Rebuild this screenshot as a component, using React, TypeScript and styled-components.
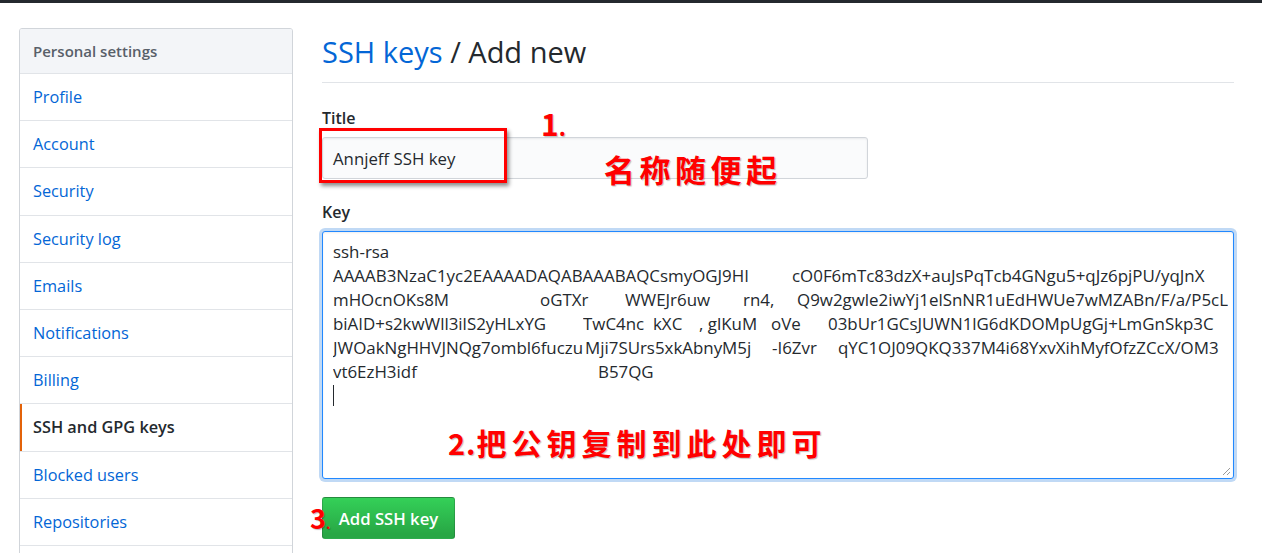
import React from "react";
import styled, { createGlobalStyle } from "styled-components";

const GlobalStyle = createGlobalStyle`
  html, body { margin: 0; padding: 0; overflow: hidden; background: #fff; }
  body {
    font-family: "Open Sans", "Noto Sans", sans-serif;
    color: #24292e;
    font-size: 16px;
  }
`;

const TopBar = styled.div`
  height: 3px;
  background: #24292e;
`;

const Page = styled.div`
  display: flex;
  align-items: flex-start;
  gap: 29px;
  padding: 25px 28px 0 19px;
`;

const Sidebar = styled.nav`
  flex: none;
  width: 274px;
  box-sizing: border-box;
  padding-bottom: 30px;
  border: 1px solid #d1d5da;
  border-radius: 3px;
  overflow: hidden;
`;

const MenuHeading = styled.div`
  display: flex;
  align-items: center;
  height: 44px;
  padding: 0 13px;
  background: #f3f5f8;
  border-bottom: 1px solid #e1e4e8;
  color: #586069;
  font-weight: 600;
  font-size: 15px;
`;

const MenuItem = styled.a<{ $selected?: boolean }>`
  display: flex;
  align-items: center;
  height: 46.2px;
  padding: 0 13px;
  border-bottom: 1px solid #e1e4e8;
  font-size: 16.3px;
  text-decoration: none;
  color: ${(p) => (p.$selected ? "#24292e" : "#0366d6")};
  font-weight: ${(p) => (p.$selected ? 600 : 400)};
  box-shadow: ${(p) => (p.$selected ? "inset 2px 0 0 #e36209" : "none")};
`;

const Main = styled.main`
  position: relative;
  flex: 1;
  min-width: 0;
`;

const Subhead = styled.div`
  margin-top: 4px;
  padding-bottom: 10px;
  border-bottom: 1px solid #e1e4e8;
`;

const Heading = styled.h2`
  margin: 0;
  font-size: 29px;
  font-weight: 400;
  line-height: 40px;
  color: #24292e;
`;

const HeadLink = styled.a`
  color: #0366d6;
  text-decoration: none;
`;

const FormGroup = styled.div<{ $top: number }>`
  margin-top: ${(p) => p.$top}px;
`;

const Label = styled.label`
  display: block;
  font-weight: 600;
  font-size: 16px;
  line-height: 24px;
  margin-bottom: 7px;
  color: #24292e;
`;

const TextInput = styled.div`
  display: flex;
  align-items: center;
  box-sizing: border-box;
  width: 546px;
  height: 42px;
  padding: 0 10px;
  background: #fafbfc;
  border: 1px solid #d1d5da;
  border-radius: 3px;
  box-shadow: inset 0 1px 2px rgba(27, 31, 35, 0.075);
  font-size: 16.8px;
`;

const KeyBox = styled.div`
  position: relative;
  box-sizing: border-box;
  height: 248px;
  padding: 8px 10px;
  background: #fff;
  border: 1px solid #2188ff;
  border-radius: 3px;
  box-shadow: inset 0 1px 2px rgba(27, 31, 35, 0.075), 0 0 0 3px rgba(3, 102, 214, 0.25);
  font-size: 16.9px;
  color: #24292e;
`;

const KeyLine = styled.div`
  display: flex;
  height: 24px;
  line-height: 24px;
  white-space: nowrap;
`;

const Seg = styled.span<{ $w?: number }>`
  flex: none;
  white-space: pre;
  overflow: hidden;
  ${(p) => (p.$w != null ? `width: ${p.$w}px;` : "")}
`;

const Caret = styled.span`
  display: block;
  width: 1px;
  height: 21px;
  margin-top: 1px;
  background: #24292e;
`;

const Resize = styled.svg`
  position: absolute;
  right: 2px;
  bottom: 2px;
`;

const Button = styled.button`
  display: flex;
  align-items: center;
  justify-content: center;
  margin-top: 18px;
  box-sizing: border-box;
  width: 133px;
  height: 42px;
  padding: 0 12px;
  border: 1px solid rgba(27, 31, 35, 0.2);
  border-radius: 3px;
  background: linear-gradient(-180deg, #34d058 0%, #28a745 90%);
  color: #fff;
  font-family: "Open Sans", "Noto Sans", sans-serif;
  font-size: 16.7px;
  font-weight: 600;
`;

const RedBox = styled.div`
  position: absolute;
  left: -3px;
  top: 100px;
  width: 188px;
  height: 55px;
  box-sizing: border-box;
  border: 3px solid #ff0000;
  box-shadow: 2px 3px 4px rgba(0, 0, 0, 0.45);
  pointer-events: none;
`;

const Note = styled.div<{ $x: number; $y: number; $size: number; $ls?: number }>`
  position: absolute;
  left: ${(p) => p.$x}px;
  top: ${(p) => p.$y}px;
  z-index: 2;
  display: flex;
  align-items: baseline;
  font-family: "Noto Sans CJK SC", "Noto Sans", sans-serif;
  font-weight: 700;
  font-size: ${(p) => p.$size}px;
  line-height: 1;
  letter-spacing: ${(p) => p.$ls ?? 0}px;
  color: #ff0000;
  text-shadow: 1px 1px 1px rgba(0, 0, 0, 0.25);
  white-space: nowrap;
`;

const Small = styled.span<{ $size: number; $ls?: number }>`
  font-size: ${(p) => p.$size}px;
  letter-spacing: ${(p) => p.$ls ?? 0}px;
`;

type Segment = { x: number; t: string };

const keyLines: Segment[][] = [
  [{ x: 0, t: "ssh-rsa" }],
  [
    { x: 0, t: "AAAAB3NzaC1yc2EAAAADAQABAAABAQCsmyOGJ9HI" },
    { x: 459, t: "cO0F6mTc83dzX+auJsPqTcb4GNgu5+qJz6pjPU/yqJnX" },
  ],
  [
    { x: 0, t: "mHOcnOKs8M" },
    { x: 207, t: "oGTXr" },
    { x: 292, t: "WWEJr6uw" },
    { x: 410, t: "rn4," },
    { x: 464, t: "Q9w2gwle2iwYj1elSnNR1uEdHWUe7wMZABn/F/a/P5cL" },
  ],
  [
    { x: 0, t: "biAID+s2kwWll3ilS2yHLxYG" },
    { x: 250, t: "TwC4nc" },
    { x: 320, t: "kXC" },
    { x: 366, t: ", glKuM" },
    { x: 438, t: "oVe" },
    { x: 495, t: "03bUr1GCsJUWN1lG6dKDOMpUgGj+LmGnSkp3C" },
  ],
  [
    { x: 0, t: "JWOakNgHHVJNQg7ombl6fuczu" },
    { x: 252, t: "Mji7SUrs5xkAbnyM5j" },
    { x: 439, t: "-I6Zvr" },
    { x: 505, t: "qYC1OJ09QKQ337M4i68YxvXihMyfOfzZCcX/OM3" },
  ],
  [
    { x: 0, t: "vt6EzH3idf" },
    { x: 265, t: "B57QG" },
  ],
];

const menu = [
  "Profile",
  "Account",
  "Security",
  "Security log",
  "Emails",
  "Notifications",
  "Billing",
  "SSH and GPG keys",
  "Blocked users",
  "Repositories",
];

export default function App() {
  return (
    <>
      <GlobalStyle />
      <TopBar />
      <Page>
        <Sidebar>
          <MenuHeading>Personal settings</MenuHeading>
          {menu.map((m) => (
            <MenuItem key={m} href="#" $selected={m === "SSH and GPG keys"}>
              {m}
            </MenuItem>
          ))}
        </Sidebar>
        <Main>
          <Subhead>
            <Heading>
              <HeadLink href="#">SSH keys</HeadLink> / Add new
            </Heading>
          </Subhead>
          <FormGroup $top={23}>
            <Label>Title</Label>
            <TextInput>Annjeff SSH key</TextInput>
          </FormGroup>
          <FormGroup $top={21}>
            <Label>Key</Label>
            <KeyBox>
              {keyLines.map((line, i) => (
                <KeyLine key={i}>
                  {line.map((s, j) => {
                    const next = line[j + 1];
                    return (
                      <Seg key={j} $w={next ? next.x - s.x : undefined}>
                        {s.t}
                      </Seg>
                    );
                  })}
                </KeyLine>
              ))}
              <KeyLine>
                <Caret />
              </KeyLine>
              <Resize width="10" height="10" viewBox="0 0 10 10">
                <path d="M9 2 L2 9 M9 6 L6 9" stroke="#9a9a9a" strokeWidth="1" fill="none" />
              </Resize>
            </KeyBox>
          </FormGroup>
          <Button type="button">Add SSH key</Button>

          <RedBox />
          <Note $x={219} $y={80} $size={30}>
            1<Small $size={22}>.</Small>
          </Note>
          <Note $x={282} $y={125} $size={31} $ls={4.5}>
            名称随便起
          </Note>
          <Note $x={126} $y={399} $size={30}>
            <Small $size={29} $ls={1}>2.</Small>
            <Small $size={30} $ls={5}>把公钥复制到此处即可</Small>
          </Note>
          <Note $x={-12} $y={476} $size={27}>
            3<Small $size={13}>.</Small>
          </Note>
        </Main>
      </Page>
    </>
  );
}
